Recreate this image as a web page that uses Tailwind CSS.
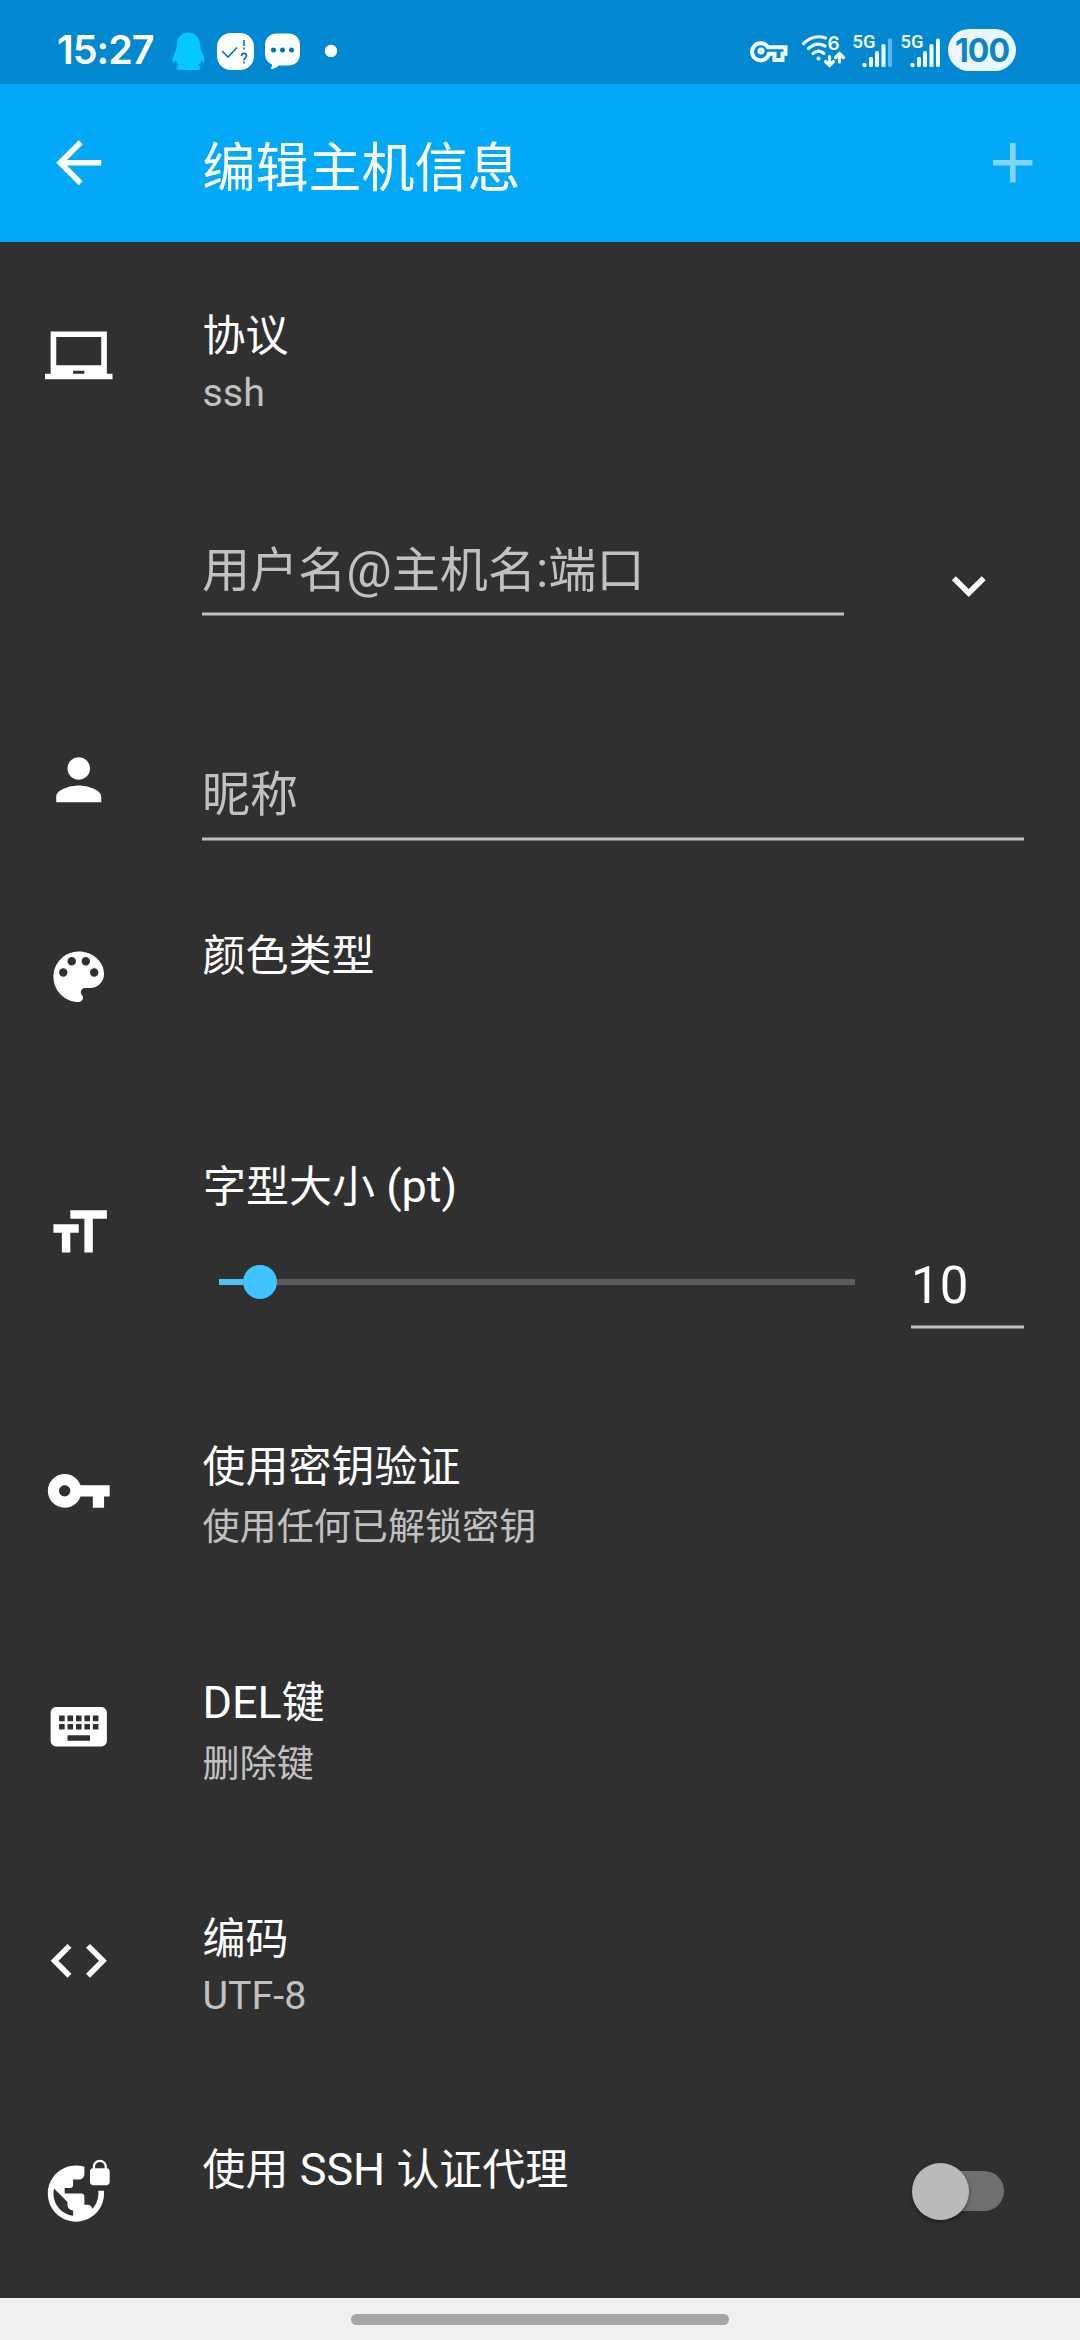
<!DOCTYPE html>
<html lang="zh-CN">
<head>
<meta charset="utf-8">
<title>编辑主机信息</title>
<script src="https://cdn.jsdelivr.net/npm/@tailwindcss/browser@4"></script>
</head>
<body class="bg-[#303030]">
<div class="w-[1080px] h-[2340px] flex flex-col overflow-hidden bg-[#303030] text-white font-['Noto_Sans_CJK_SC',sans-serif]">

  <!-- status bar -->
  <header class="h-[84px] shrink-0 bg-[#0288d1] flex">
    <div class="w-[172px] pl-[57px] pt-[26px] font-['Inter'] font-semibold text-[39.5px] leading-[48px] tracking-[-1px] whitespace-nowrap">15:27</div>
    <svg class="w-[180px] h-[84px]" viewBox="172 0 180 84">
      <path fill="#05c8ff" d="M188.500 32.500c-6.500 0-11 4.500-11.500 11.500-.1 2-.4 4-1.200 6.200-1.500 4-3.300 8-3.300 11.500 0 1.500.8 1.500 1.500.8l1.800-2.200c.6 2 1.600 3.500 3 4.800-1.500.8-2.300 1.800-2.300 3 0 1.600 1.500 1.900 4 1.900h16c2.500 0 4-.3 4-1.900 0-1.200-.8-2.200-2.300-3 1.400-1.300 2.400-2.800 3-4.800l1.800 2.200c.7.7 1.500.7 1.500-.8 0-3.500-1.800-7.500-3.300-11.500-.8-2.200-1.100-4.200-1.200-6.200-.5-7-5-11.500-11.500-11.500z"/>
      <rect x="217" y="33" width="37" height="37" rx="14" fill="#fff"/>
      <g fill="none" stroke="#0278a8" stroke-width="1.600"><path d="M222 51l6 6 9-9.500M244 40v6M244 47.500v2M241.500 56c0-3.500 5-3.500 5 0 0 2-2.500 2-2.500 4.500M244 61.500v2"/></g>
      <path fill="#fff" d="M277 33.500h11c8 0 12 5 12 12v8c0 8-5 12-12 12h-9c-3 2.500-6 3.800-8.500 3.500 1.200-1.500 1.700-3 1.300-4.800-4.500-1.700-6.800-5.700-6.800-10.700v-8c0-7 4-12 12-12z"/>
      <g fill="#0278a8"><circle cx="273.500" cy="50" r="2.500"/><circle cx="282.500" cy="50" r="2.500"/><circle cx="291.500" cy="50" r="2.500"/></g>
      <circle cx="331" cy="51" r="6.200" fill="#fff"/>
    </svg>
    <svg class="w-[200px] h-[84px] ml-auto" viewBox="748 0 200 84">
      <g fill="none" stroke="#f0fbff" stroke-width="4">
        <path d="M768 47.300h17.500v6.500h-3V60h-8v-6.200h-5.500a8.600 8.600 0 1 1-1-6.500z"/>
        <circle cx="761" cy="51" r="2" stroke-width="3"/>
      </g>
      <g fill="none" stroke="#f0fbff" stroke-width="3.200" stroke-linecap="round">
        <path d="M803.500 43.500c8-7.500 15-8 22-5.500M808.500 48.500c5-4.500 11-5.500 16.500-2.500M813 53.500c3.500-3 7.500-3 11 0"/>
        <path d="M829.500 56.500v8.500M825.500 61.500l4 4 4-4M839.500 62v-8.500M835.500 57.500l4-4 4 4"/>
      </g>
      <circle cx="818.500" cy="58.500" r="2" fill="#f0fbff"/>
      <g fill="#f0fbff" font-family="Roboto" font-weight="600">
        <text x="827.500" y="49.500" font-size="19" font-family="Inter">6</text>
        <text x="852.500" y="47.700" font-size="19" textLength="23" lengthAdjust="spacingAndGlyphs">5G</text>
        <text x="900.500" y="47.700" font-size="19" textLength="23" lengthAdjust="spacingAndGlyphs">5G</text>
      </g>
      <g fill="#f0fbff">
        <circle cx="864.500" cy="65" r="2.200"/><rect x="869" y="57" width="4" height="10" rx="1.500"/><rect x="875" y="51" width="4" height="16" rx="1.500"/><rect x="881.500" y="44" width="4" height="23" rx="1.500"/><rect x="888" y="38.500" width="4" height="28.500" rx="1.500" fill="#5cb8f5"/>
        <circle cx="912.500" cy="65" r="2.200"/><rect x="917" y="57" width="4" height="10" rx="1.500"/><rect x="923" y="51" width="4" height="16" rx="1.500"/><rect x="929.500" y="44" width="4" height="23" rx="1.500"/><rect x="936" y="38.500" width="4" height="28.500" rx="1.500"/>
      </g>
    </svg>
    <div class="mt-[29px] mr-16 w-[68px] h-[42px] rounded-full bg-[#ebf7fe] text-[#0b84c8] font-['Inter'] font-bold text-[32px] leading-[43px] text-center tracking-[-1px]">100</div>
  </header>

  <!-- app bar -->
  <div class="h-[158px] shrink-0 bg-[#03a9f6] flex">
    <svg class="w-[67.5px] h-[67.5px] ml-[45px] mt-[45px]" viewBox="0 0 24 24" fill="#fff"><path d="M20 11H7.830l5.590-5.590L12 4l-8 8 8 8 1.410-1.410L7.830 13H20v-2z"/></svg>
    <h1 class="ml-[90px] mt-[50px] text-[53px] leading-[60px] font-normal">编辑主机信息</h1>
    <svg class="w-[67.5px] h-[67.5px] ml-auto mr-[34px] mt-[44.500px]" viewBox="0 0 24 24" fill="#fff" fill-opacity=".5"><path d="M19 13h-6v6h-2v-6H5v-2h6V5h2v6h6v2z"/></svg>
  </div>

  <main class="flex-1 flex flex-col">
    <section class="h-[236px] flex">
      <svg class="w-[67.5px] h-[67.5px] ml-[45px] mr-[90px] mt-[80.5px]" viewBox="0 0 24 24" fill="#fff"><path d="M22 18V3H2v15H0v2h24v-2h-2zm-8 0h-4v-1h4v1zm6-3H4V5h16v10z"/></svg>
      <div class="pt-[65px]">
        <div class="text-[43px] leading-[50px]">协议</div>
        <div class="mt-[13.5px] font-['Roboto'] text-[39.4px] leading-[44px] text-[#c1c1c1]">ssh</div>
      </div>
    </section>

    <section class="h-[182px] flex pl-[202px]">
      <div class="w-[642px] pt-[58px]">
        <div class="text-[48.1px] leading-[60px] text-[#c1c1c1] whitespace-nowrap">用户名<span class="font-['Roboto'] text-[50.6px] leading-none">@</span>主机名<span class="font-['Roboto'] text-[50.6px] leading-none">:</span>端口</div>
        <div class="mt-4 h-1 bg-[#c1c1c1] border-y border-[#777]"></div>
      </div>
      <svg class="w-[67.5px] h-[67.5px] ml-[90.5px] mt-[74px]" viewBox="0 0 24 24" fill="#fff"><path d="M16.590 8.590L12 13.170 7.410 8.590 6 10l6 6 6-6z"/></svg>
    </section>

    <section class="h-[220px] flex">
      <svg class="w-[67.5px] h-[67.5px] ml-[45px] mr-[89.500px] mt-[86px]" viewBox="0 0 24 24" fill="#fff"><path d="M12 12c2.210 0 4-1.790 4-4s-1.790-4-4-4-4 1.790-4 4 1.790 4 4 4zm0 2c-2.670 0-8 1.340-8 4v2h16v-2c0-2.660-5.330-4-8-4z"/></svg>
      <div class="w-[822px] pt-[100px]">
        <div class="text-[48.1px] leading-[60px] text-[#c1c1c1]">昵称</div>
        <div class="mt-[17px] h-1 bg-[#c1c1c1] border-y border-[#777]"></div>
      </div>
    </section>

    <section class="h-[210px] flex">
      <svg class="w-[67.5px] h-[67.5px] ml-[45px] mr-[90px] mt-[63px]" viewBox="0 0 24 24" fill="#fff"><path d="M12 3c-4.970 0-9 4.030-9 9s4.030 9 9 9c.83 0 1.500-.67 1.500-1.500 0-.39-.15-.74-.39-1.010-.23-.26-.38-.61-.38-.99 0-.83.67-1.500 1.500-1.500H16c2.760 0 5-2.240 5-5 0-4.420-4.030-8-9-8zm-5.500 9c-.83 0-1.500-.67-1.500-1.500S5.670 9 6.500 9 8 9.670 8 10.500 7.330 12 6.500 12zm3-4C8.670 8 8 7.330 8 6.500S8.670 5 9.500 5s1.500.67 1.500 1.500S10.330 8 9.500 8zm5 0c-.83 0-1.500-.67-1.500-1.500S13.670 5 14.500 5s1.500.67 1.500 1.500S15.330 8 14.500 8zm3 4c-.83 0-1.500-.67-1.500-1.500S16.670 9 17.500 9s1.500.67 1.500 1.500-.67 1.500-1.500 1.500z"/></svg>
      <div class="pt-[47px] text-[43px] leading-[50px]">颜色类型</div>
    </section>

    <section class="h-[301px] flex">
      <svg class="w-[67.5px] h-[67.5px] ml-[45px] mr-[89.500px] mt-[108.5px]" viewBox="0 0 24 24" fill="#fff"><path d="M9 4v3h5v12h3V7h5V4H9zm-6 8h3v7h3v-7h3V9H3v3z"/></svg>
      <div class="w-[709px] pt-[68px]">
        <div class="text-[43px] leading-[50px] pl-px">字型大小<span class="font-['Roboto'] text-[45px] leading-none"> (pt)</span></div>
        <div class="mt-[56px] ml-[17px] h-[34px] w-[636px] flex items-center">
          <div class="w-6 h-1.5 bg-[#4fc3f7]"></div>
          <div class="size-[34px] rounded-full bg-[#40c4ff]"></div>
          <div class="flex-1 h-1.5 bg-[#5c5c5c]"></div>
        </div>
      </div>
      <div class="w-[113px] pt-[166px]">
        <div class="font-['Roboto'] text-[51px] leading-[60px]">10</div>
        <div class="mt-[9px] h-1 bg-[#c1c1c1] border-y border-[#777]"></div>
      </div>
    </section>

    <section class="h-[236px] flex">
      <svg class="w-[67.5px] h-[67.5px] ml-[45px] mr-[90px] mt-[66px]" viewBox="0 0 24 24" fill="#fff"><path d="M12.650 10C11.830 7.670 9.610 6 7 6c-3.310 0-6 2.690-6 6s2.690 6 6 6c2.610 0 4.830-1.670 5.650-4H17v4h4v-4h2v-4H12.650zM7 14c-1.100 0-2-.9-2-2s.9-2 2-2 2 .9 2 2-.9 2-2 2z"/></svg>
      <div class="pt-[47px]">
        <div class="text-[43px] leading-[50px]">使用密钥验证</div>
        <div class="mt-3.5 text-[37.1px] leading-[44px] text-[#c1c1c1]">使用任何已解锁密钥</div>
      </div>
    </section>

    <section class="h-[235px] flex">
      <svg class="w-[67.5px] h-[67.5px] ml-[45px] mr-[90px] mt-[66px]" viewBox="0 0 24 24" fill="#fff"><path d="M20 5H4c-1.100 0-1.990.9-1.990 2L2 17c0 1.100.9 2 2 2h16c1.100 0 2-.9 2-2V7c0-1.100-.9-2-2-2zm-9 3h2v2h-2V8zm0 3h2v2h-2v-2zM8 8h2v2H8V8zm0 3h2v2H8v-2zm-1 2H5v-2h2v2zm0-3H5V8h2v2zm9 7H8v-2h8v2zm0-4h-2v-2h2v2zm0-3h-2V8h2v2zm3 3h-2v-2h2v2zm0-3h-2V8h2v2z"/></svg>
      <div class="pt-[47px]">
        <div class="text-[43px] leading-[50px]"><span class="font-['Roboto'] text-[45px] leading-none">DEL</span>键</div>
        <div class="mt-3.5 text-[37.1px] leading-[44px] text-[#c1c1c1]">删除键</div>
      </div>
    </section>

    <section class="h-[236px] flex">
      <svg class="w-[67.5px] h-[67.5px] ml-[45px] mr-[90px] mt-[64.5px]" viewBox="0 0 24 24" fill="#fff"><path d="M9.400 16.600L4.800 12l4.600-4.600L8 6l-6 6 6 6 1.400-1.400zm5.200 0l4.600-4.600-4.600-4.600L16 6l6 6-6 6-1.400-1.400z"/></svg>
      <div class="pt-12">
        <div class="text-[43px] leading-[50px]">编码</div>
        <div class="mt-[13.500px] font-['Roboto'] text-[39.4px] leading-[44px] text-[#c1c1c1]">UTF-8</div>
      </div>
    </section>

    <section class="h-[200px] flex">
      <svg class="w-[67.5px] h-[67.5px] ml-[45px] mr-[90px] mt-[58.5px]" viewBox="0 0 24 24" fill="#fff"><path d="M22 4v-.5C22 2.120 20.880 1 19.500 1S17 2.120 17 3.500V4c-.55 0-1 .45-1 1v4c0 .55.45 1 1 1h5c.55 0 1-.45 1-1V5c0-.55-.45-1-1-1zm-.8 0h-3.400v-.5c0-.94.76-1.700 1.700-1.700s1.700.76 1.700 1.700V4zm-2.280 8c.04.33.08.66.08 1 0 2.080-.8 3.970-2.100 5.390-.26-.81-1-1.390-1.900-1.390h-1v-3c0-.55-.45-1-1-1H7v-2h2c.55 0 1-.45 1-1V8h2c1.100 0 2-.9 2-2V3.460c-.95-.3-1.950-.46-3-.46C5.480 3 1 7.480 1 13s4.480 10 10 10 10-4.480 10-10c0-.34-.02-.67-.05-1h-2.030zM10 20.930c-3.950-.49-7-3.850-7-7.930 0-.62.08-1.210.21-1.790L8 16v1c0 1.100.9 2 2 2v1.930z"/></svg>
      <div class="pt-[43px] text-[43px] leading-[50px]">使用<span class="font-['Roboto'] text-[45px] leading-none"> SSH </span>认证代理</div>
      <div class="ml-auto mr-[76px] mt-[73px] w-[90px] h-10 rounded-full bg-[#6f6f6f] flex items-center">
        <div class="size-[57px] shrink-0 -ml-0.5 rounded-full bg-[#bababa] shadow-[0_2px_4px_rgba(0,0,0,0.4)]"></div>
      </div>
    </section>
  </main>

  <!-- gesture bar -->
  <footer class="h-[42px] shrink-0 bg-[#f0f0f1] flex justify-center pt-4">
    <div class="w-[378px] h-[11px] rounded-full bg-[#a6a6a6]"></div>
  </footer>
</div>
</body>
</html>
